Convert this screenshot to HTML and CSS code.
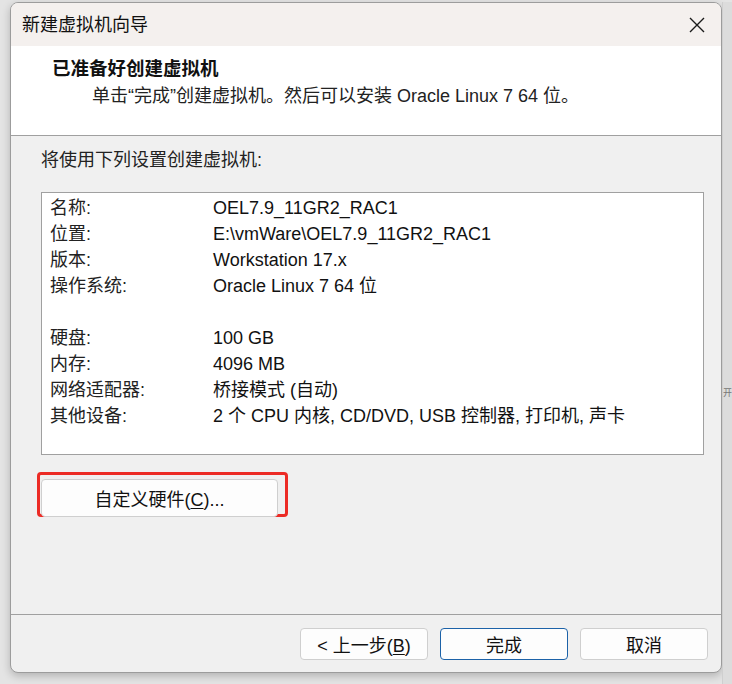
FILE: index.html
```html
<!DOCTYPE html>
<html lang="zh">
<head>
<meta charset="utf-8">
<title>新建虚拟机向导</title>
<link rel="stylesheet" href="styles.css">
</head>
<body>
<div class="desk">
  <div class="window">
    <div class="titlebar">
      <span class="title">新建虚拟机向导</span>
      <span class="close">
        <svg width="16" height="16" viewBox="0 0 16 16"><path d="M1 1 L15 15 M15 1 L1 15" stroke="#1a1a1a" stroke-width="1.4" fill="none"/></svg>
      </span>
    </div>
    <div class="header">
      <div class="h-title">已准备好创建虚拟机</div>
      <div class="h-sub">单击“完成”创建虚拟机。然后可以安装 Oracle Linux 7 64 位。</div>
    </div>
    <div class="content">
      <div class="intro">将使用下列设置创建虚拟机:</div>
      <div class="summary">
        <div class="row"><span class="lbl">名称:</span><span class="val">OEL7.9_11GR2_RAC1</span></div>
        <div class="row"><span class="lbl">位置:</span><span class="val">E:\vmWare\OEL7.9_11GR2_RAC1</span></div>
        <div class="row"><span class="lbl">版本:</span><span class="val">Workstation 17.x</span></div>
        <div class="row"><span class="lbl">操作系统:</span><span class="val">Oracle Linux 7 64 位</span></div>
        <div class="row"></div>
        <div class="row"><span class="lbl">硬盘:</span><span class="val">100 GB</span></div>
        <div class="row"><span class="lbl">内存:</span><span class="val">4096 MB</span></div>
        <div class="row"><span class="lbl">网络适配器:</span><span class="val">桥接模式 (自动)</span></div>
        <div class="row"><span class="lbl">其他设备:</span><span class="val">2 个 CPU 内核, CD/DVD, USB 控制器, 打印机, 声卡</span></div>
      </div>
      <div class="highlight">
        <button class="btn custom">自定义硬件(<u>C</u>)...</button>
      </div>
    </div>
    <div class="footer">
      <button class="btn foot">&lt; 上一步(<u>B</u>)</button>
      <button class="btn foot primary">完成</button>
      <button class="btn foot">取消</button>
    </div>
  </div>
  <div class="side"><span class="peek">开</span></div>
</div>
</body>
</html>
```
FILE: styles.css
```css
* { box-sizing: border-box; }
html, body { margin: 0; padding: 0; }
body {
  width: 732px;
  height: 684px;
  background: #e4e4e4;
  font-family: "Liberation Sans", "Noto Sans CJK SC", sans-serif;
  font-size: 18px;
  color: #111;
  overflow: hidden;
}
.desk {
  display: flex;
  padding: 2px 0 0 10px;
  height: 684px;
}
.window {
  width: 712px;
  height: 671px;
  border: 1px solid #9c9c9c;
  border-radius: 8px;
  background: #f0f0f0;
  box-shadow: 0 3px 8px rgba(0,0,0,0.22);
  display: flex;
  flex-direction: column;
  overflow: hidden;
  flex: none;
}
.titlebar {
  height: 43px;
  background: #f4f0ee;
  display: flex;
  align-items: center;
  justify-content: space-between;
  padding: 0 16px 0 11px;
}
.title {
  font-size: 18px;
  color: #111;
  line-height: 24px;
}
.close { display: flex; width: 16px; height: 16px; }
.header {
  height: 90px;
  background: #fff;
  border-bottom: 1px solid #a0a0a0;
  padding: 11px 0 0 41px;
}
.h-title {
  font-weight: bold;
  font-size: 18.5px;
  line-height: 24px;
  color: #111;
}
.h-sub {
  margin: 3px 0 0 40px;
  line-height: 24px;
  color: #222;
}
.content {
  height: 479px;
  border-bottom: 1px solid #a0a0a0;
  padding: 12px 17px 0 30px;
}
.intro {
  line-height: 24px;
  color: #222;
}
.summary {
  margin-top: 20px;
  height: 263px;
  background: #fff;
  border: 1px solid #a0a0a0;
  padding: 2px 8px 0 8px;
}
.row {
  display: flex;
  height: 26px;
  line-height: 26px;
}
.lbl { width: 163px; flex: none; color: #222; }
.val { color: #111; white-space: nowrap; }
.highlight {
  display: inline-block;
  margin: 17px 0 0 -4px;
  border: 3px solid #ec2b25;
  border-radius: 4px;
  padding: 4px 7px 0 1px;
}
.btn {
  font-family: "Liberation Sans", "Noto Sans CJK SC", sans-serif;
  font-size: 18px;
  color: #111;
  background: #fdfdfd;
  border: 1px solid #cfcfcf;
  border-radius: 4px;
  padding: 0;
  cursor: default;
}
.btn u { text-underline-offset: 2px; }
.custom {
  width: 237px;
  height: 38px;
  display: block;
  margin-bottom: -3px;
}
.footer {
  flex: 1;
  display: flex;
  justify-content: flex-end;
  gap: 12px;
  padding: 13px 13px 0 0;
}
.foot {
  width: 128px;
  height: 32px;
}
.primary {
  border-color: #1c62a8;
}
.side {
  flex: 1;
  height: 684px;
  background: #dcdcdc;
  border-left: 1px solid #cfcfcf;
  position: relative;
  overflow: hidden;
}
.peek {
  position: absolute;
  left: 0;
  top: 384px;
  color: #777;
  font-size: 9px;
}
```
